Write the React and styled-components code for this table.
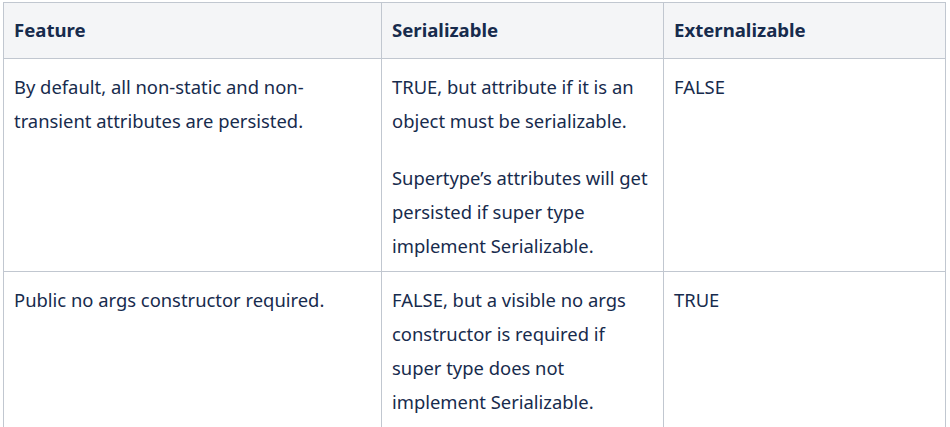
import React from "react";
import styled, { createGlobalStyle } from "styled-components";

const GlobalStyle = createGlobalStyle`
  body {
    margin: 0;
    background: #ffffff;
    font-family: "Noto Sans", "Open Sans", sans-serif;
    color: #172b4d;
  }
`;

const rows = [
  {
    feature: ["By default, all non-static and non-transient attributes are persisted."],
    serializable: [
      "TRUE, but attribute if it is an object must be serializable.",
      "Supertype\u2019s attributes will get persisted if super type implement Serializable.",
    ],
    externalizable: ["FALSE"],
  },
  {
    feature: ["Public no args constructor required."],
    serializable: [
      "FALSE, but a visible no args constructor is required if super type does not implement Serializable.",
    ],
    externalizable: ["TRUE"],
  },
];

function App() {
  return (
    <>
      <GlobalStyle />
      <Wrap>
        <Table>
          <colgroup>
            <col style={{ width: 378 }} />
            <col style={{ width: 282 }} />
            <col style={{ width: 282 }} />
          </colgroup>
          <thead>
            <tr>
              <HeadCell>Feature</HeadCell>
              <HeadCell>Serializable</HeadCell>
              <HeadCell>Externalizable</HeadCell>
            </tr>
          </thead>
          <tbody>
            {rows.map((row, i) => (
              <tr key={i}>
                {[row.feature, row.serializable, row.externalizable].map((paras, j) => (
                  <Cell key={j}>
                    {paras.map((p, k) => (
                      <Para key={k}>{p}</Para>
                    ))}
                  </Cell>
                ))}
              </tr>
            ))}
          </tbody>
        </Table>
      </Wrap>
    </>
  );
}

export default App;

const Wrap = styled.div`
  padding: 2px 0 0 3px;
`;

const Table = styled.table`
  border-collapse: collapse;
  table-layout: fixed;
  width: 943px;
`;

const HeadCell = styled.th`
  background: #f4f5f7;
  border: 1px solid #c1c7d0;
  text-align: left;
  font-weight: 700;
  font-size: 18.6px;
  line-height: 34px;
  padding: 10px 10px 11px;
  color: #172b4d;
`;

const Cell = styled.td`
  border: 1px solid #c1c7d0;
  vertical-align: top;
  font-size: 18.4px;
  line-height: 34px;
  padding: 11px 10px 8px;
  color: #172b4d;
`;

const Para = styled.p`
  margin: 0;
  & + & {
    margin-top: 23px;
  }
`;
